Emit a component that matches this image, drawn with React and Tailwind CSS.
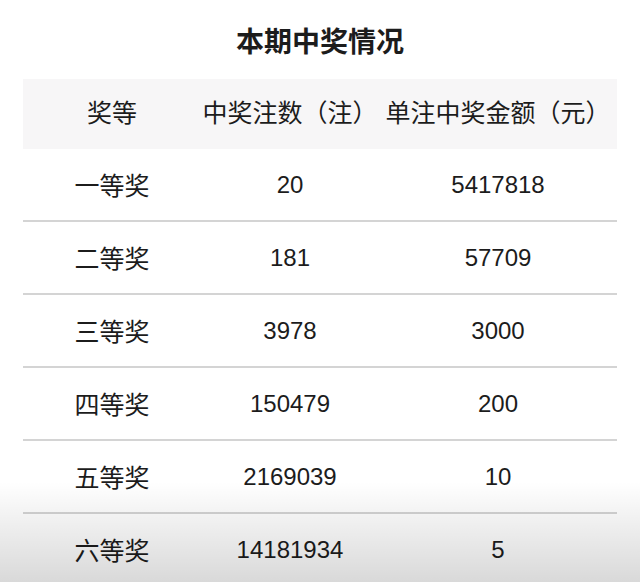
import React from "react";

const rows = [
  ["一等奖", "20", "5417818"],
  ["二等奖", "181", "57709"],
  ["三等奖", "3978", "3000"],
  ["四等奖", "150479", "200"],
  ["五等奖", "2169039", "10"],
  ["六等奖", "14181934", "5"],
];

const num = { fontFamily: '"Liberation Sans", "Noto Sans CJK SC", sans-serif' };

export default function App() {
  return (
    <div
      className="relative w-[640px] h-[582px] overflow-hidden bg-white text-[#1c1c1c]"
      style={{ fontFamily: '"Noto Sans CJK SC", "Noto Sans", sans-serif' }}
    >
      <div className="h-[79px] flex items-center justify-center text-[28px] font-bold leading-none">
        本期中奖情况
      </div>
      <div className="px-[23px]">
        <div className="grid grid-cols-[178px_178px_238px] h-[70px] items-center bg-[#f7f6f7] text-[25px] leading-none pb-[5px]">
          <div className="text-center">奖等</div>
          <div className="text-center">中奖注数（注）</div>
          <div className="text-center">单注中奖金额（元）</div>
        </div>
        {rows.map((r, i) => (
          <div
            key={i}
            className="grid grid-cols-[178px_178px_238px] h-[73px] items-center border-b-2 border-[#d4d4d4] text-[25px] leading-none"
          >
            <div className="text-center">{r[0]}</div>
            <div className="text-center text-[24px] pt-[1px]" style={num}>{r[1]}</div>
            <div className="text-center text-[24px] pt-[1px]" style={num}>{r[2]}</div>
          </div>
        ))}
      </div>
      <div className="pointer-events-none absolute left-0 right-0 bottom-0 h-[100px] bg-gradient-to-b from-transparent to-black/15" />
    </div>
  );
}
